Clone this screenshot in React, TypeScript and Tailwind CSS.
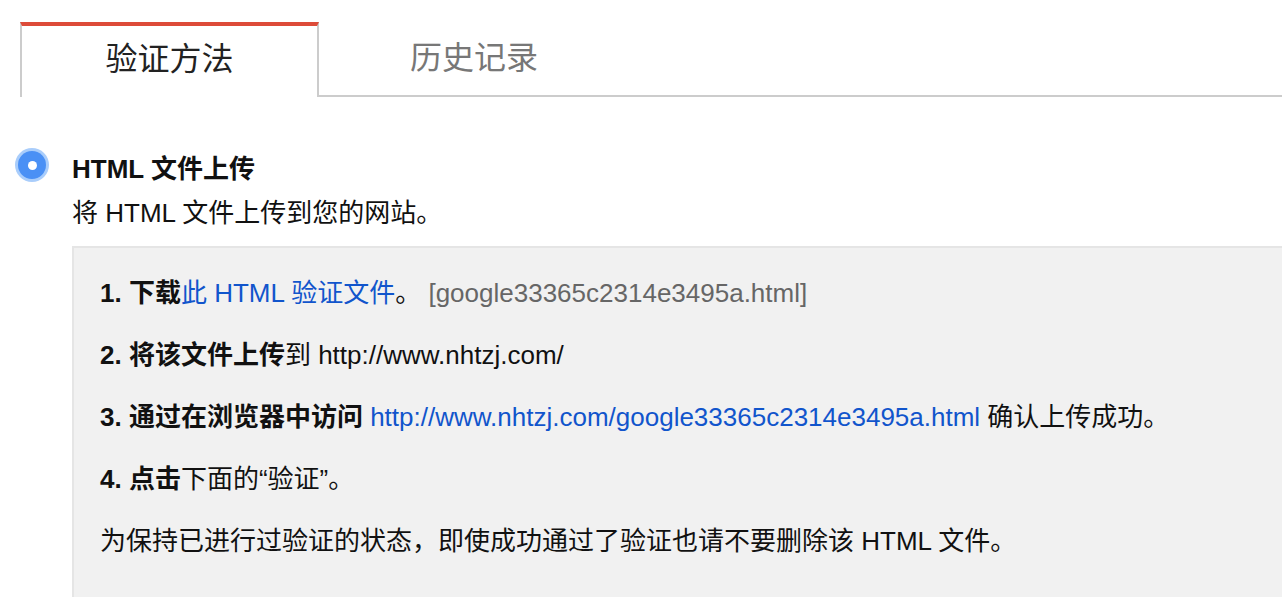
const font = { fontFamily: '"Liberation Sans", Arial, "Noto Sans CJK SC", sans-serif' };

function Radio() {
  return (
    <span className="flex h-[34px] w-[34px] items-center justify-center rounded-full bg-[#a9cdfb]">
      <span className="flex h-[28px] w-[28px] items-center justify-center rounded-full bg-[#4a90f5]">
        <span className="h-[9px] w-[9px] rounded-full bg-white" />
      </span>
    </span>
  );
}

export default function App() {
  return (
    <div className="min-h-screen bg-white text-[26px] text-[#111]" style={font}>
      <div className="flex pt-[22px] pl-[20px]">
        <div className="flex h-[75px] w-[299px] items-center justify-center border-x-2 border-t-4 border-x-[#cccccc] border-t-[#dd4b39] pb-[5px] text-[32px] text-[#222]">
          验证方法
        </div>
        <div className="flex h-[75px] flex-1 items-center border-b-2 border-[#cccccc] pb-[2px]">
          <span className="w-[310px] text-center text-[32px] text-[#777]">历史记录</span>
        </div>
      </div>

      <div className="flex gap-[23px] pt-[50px] pl-[15px]">
        <div className="pt-[1px]">
          <Radio />
        </div>
        <div className="flex-1">
          <div className="text-[26px] leading-[44px] font-bold">HTML 文件上传</div>
          <div className="leading-[44px]">将 HTML 文件上传到您的网站。</div>
          <div className="mt-[11px] flex flex-col gap-[30px] border-t-2 border-l-2 border-[#e5e5e5] bg-[#f1f1f1] pt-[29px] pb-[40px] pl-[26px] leading-[32px]">
            <div>
              <b>1. 下载</b>
              <span className="text-[#1155cc]">此 HTML 验证文件</span>。{" "}
              <span className="text-[#666]">[google33365c2314e3495a.html]</span>
            </div>
            <div>
              <b>2. 将该文件上传</b>到 http://www.nhtzj.com/
            </div>
            <div>
              <b>3. 通过在浏览器中访问</b>{" "}
              <span className="text-[#1155cc]">http://www.nhtzj.com/google33365c2314e3495a.html</span> 确认上传成功。
            </div>
            <div>
              <b>4. 点击</b>下面的“验证”。
            </div>
            <div>为保持已进行过验证的状态，即使成功通过了验证也请不要删除该 HTML 文件。</div>
          </div>
        </div>
      </div>
    </div>
  );
}
